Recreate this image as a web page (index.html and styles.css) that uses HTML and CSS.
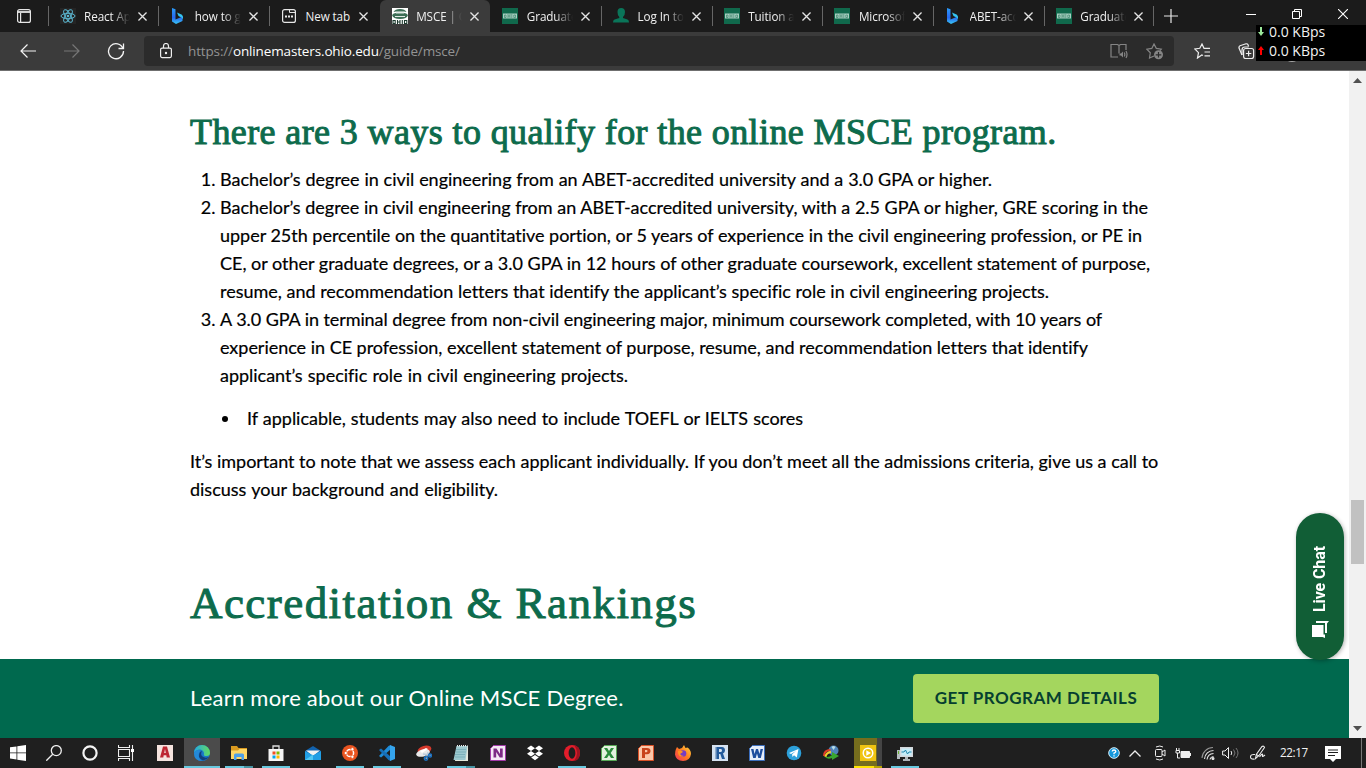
FILE: index.html
```html
<!DOCTYPE html>
<html lang="en">
<head>
<meta charset="utf-8">
<title>MSCE | Ohio University</title>
<link rel="stylesheet" href="styles.css">
</head>
<body>
<svg class="defs" aria-hidden="true">
  <defs>
    <linearGradient id="bingG" x1="0" y1="0" x2="0" y2="1"><stop offset="0" stop-color="#2a9cf8"/><stop offset=".6" stop-color="#2868f0"/><stop offset="1" stop-color="#38c8f4"/></linearGradient>
    <linearGradient id="edgeG" x1="0" y1="0" x2="1" y2="0"><stop offset="0" stop-color="#25a8e0"/><stop offset="1" stop-color="#62dc60"/></linearGradient>
    <linearGradient id="foxG" x1="0" y1="1" x2="1" y2="0"><stop offset="0" stop-color="#f0305c"/><stop offset=".5" stop-color="#ff7a20"/><stop offset="1" stop-color="#ffdc40"/></linearGradient>
    <symbol id="x" viewBox="0 0 8 8"><path d="M.4.4l7.2 7.2M7.6.4L.4 7.6" fill="none" stroke="#e4e4e4" stroke-width="1.200"/></symbol>
    <symbol id="ohio" viewBox="0 0 16 16"><path fill="#10694c" d="M0 0h16v16H0z"/><path fill="#a9cfc1" d="M1 5.500h14v5H1z"/><path d="M2.500 7h1.500v2.500h-1.500zM6 6v4M8 6v4M6 8h2M9.800 6v4M11.800 7h1.700v2.500h-1.700z" fill="none" stroke="#2b7a60" stroke-width=".6"/></symbol>
    <symbol id="bing" viewBox="0 0 16 16"><path fill="url(#bingG)" d="M2 0l3.500 1.300v10.200L12.500 8.500v4.500L6 16l-4-2.500z"/><path fill="#35c4f0" d="M7 4.500l5 2.300q1.500 1.500 1 4.700-.6-2-3-2.800L8.500 8z"/></symbol>
  </defs>
</svg>

<header class="tabs">
  <div class="tabmenu"><svg width="14" height="14" viewBox="0 0 14 14" fill="none" stroke="#e6e6e6" stroke-width="1.200"><rect x=".6" y=".6" width="12.800" height="12.800" rx="2"/><path d="M.6 3h12.800" stroke-width="1.800"/><path d="M3.600 4v9.400"/></svg></div>
  <div class="tab"><svg class="fav" viewBox="0 0 16 16"><path fill="#242424" d="M0 0h16v16H0z"/><g fill="none" stroke="#5bb6cf" stroke-width="1"><ellipse cx="8" cy="8" rx="7" ry="2.700"/><ellipse cx="8" cy="8" rx="7" ry="2.700" transform="rotate(60 8 8)"/><ellipse cx="8" cy="8" rx="7" ry="2.700" transform="rotate(120 8 8)"/></g><circle cx="8" cy="8" r="1.300" fill="#5bb6cf"/></svg><span class="tt">React App</span><svg class="cl"><use href="#x"/></svg></div>
  <div class="tab"><svg class="fav"><use href="#bing"/></svg><span class="tt">how to get</span><svg class="cl"><use href="#x"/></svg></div>
  <div class="tab"><svg class="fav" viewBox="0 0 16 16"><rect x="1.600" y="1.600" width="12.800" height="12.800" rx="2" fill="none" stroke="#e6e6e6" stroke-width="1.200"/><path d="M8.500 2v2.500h5.500" fill="none" stroke="#e6e6e6"/><path d="M4 7.500h2v2H4zM7 7.500h2v2H7zM10 7.500h2v2h-2z" fill="#e6e6e6"/></svg><span class="tt full">New tab</span><svg class="cl"><use href="#x"/></svg></div>
  <div class="tab on"><svg class="fav" viewBox="0 0 16 16"><path fill="#fff" d="M0 0h16v16H0z"/><path fill="#3b6e55" d="M1.500 4Q3 1 8 1t6.500 3L12 3.500H4zM0 7q1.500-2 4-2h8q2.500 0 4 2-1 4-8 4T0 7z"/><path fill="#dfe9e4" d="M4 4h8v1.500H4zM3 8h10v1H3z"/><path d="M1 12.500h2.200v3H1zM5.500 12v4M8 12v4M5.500 14H8M10.300 12v4M12.500 12.500h2.300v3h-2.300z" fill="none" stroke="#1c3a2e" stroke-width="1.100"/></svg><span class="tt">MSCE | Ohio</span><svg class="cl"><use href="#x"/></svg></div>
  <div class="tab nosep"><svg class="fav"><use href="#ohio"/></svg><span class="tt">Graduate</span><svg class="cl"><use href="#x"/></svg></div>
  <div class="tab"><svg class="fav" viewBox="0 0 16 16"><path fill="#0a7559" d="M4.500 4q0-4 3.700-4T12 4q0 3.500-2 5v1l4.500 1.500q1.500.5 1.500 3H0q0-2.500 1.500-3L6.300 10V9Q4.500 7.500 4.500 4z"/></svg><span class="tt">Log In to</span><svg class="cl"><use href="#x"/></svg></div>
  <div class="tab"><svg class="fav"><use href="#ohio"/></svg><span class="tt">Tuition and</span><svg class="cl"><use href="#x"/></svg></div>
  <div class="tab"><svg class="fav"><use href="#ohio"/></svg><span class="tt">Microsoft</span><svg class="cl"><use href="#x"/></svg></div>
  <div class="tab"><svg class="fav"><use href="#bing"/></svg><span class="tt">ABET-accr</span><svg class="cl"><use href="#x"/></svg></div>
  <div class="tab"><svg class="fav"><use href="#ohio"/></svg><span class="tt">Graduate</span><svg class="cl"><use href="#x"/></svg></div>
  <div class="newtab"><svg width="14" height="14" viewBox="0 0 14 14"><path d="M7 0v14M0 7h14" stroke="#e8e8e8" stroke-width="1.200"/></svg></div>
  <div class="wins">
    <svg width="10" height="10"><path d="M0 5.500h10" stroke="#fff"/></svg>
    <svg width="10" height="10" fill="none" stroke="#fff"><path d="M.5 2.500h7v7h-7zM2.500 2.500v-2h7v7h-2"/></svg>
    <svg width="10" height="10"><path d="M0 0l10 10M10 0L0 10" stroke="#fff" stroke-width="1.100"/></svg>
  </div>
</header>

<nav class="bar">
  <svg class="nb" viewBox="0 0 18 18"><path d="M17 9H2M8.500 2.500L2 9l6.500 6.500" fill="none" stroke="#f4f4f4" stroke-width="1.200"/></svg>
  <svg class="nb" viewBox="0 0 18 18"><path d="M1 9h15M9.500 2.500L16 9l-6.500 6.500" fill="none" stroke="#777" stroke-width="1.200"/></svg>
  <svg class="nb" viewBox="0 0 18 18"><path d="M16 6.500A7.500 7.500 0 1 0 16.500 9M16.500 1.500v5h-5" fill="none" stroke="#f4f4f4" stroke-width="1.300"/></svg>
  <div class="addr">
    <svg width="14" height="16" viewBox="0 0 14 16" fill="none" stroke="#eee" stroke-width="1.200"><rect x="1.600" y="5.100" width="10.800" height="9.500" rx="1.500"/><path d="M4.500 5.100V3a2.500 2.500 0 0 1 5 0v2.100"/><circle cx="7" cy="10" r=".6" fill="#eee"/></svg>
    <span class="url">https://<b>onlinemasters.ohio.edu</b>/guide/msce/</span>
    <svg class="rd" width="18" height="16" viewBox="0 0 18 16" fill="none" stroke="#858585" stroke-width="1.200"><path d="M8 14H1V1.500h6.500L9 2.500l1.500-1H16V7M9 2.500v8"/><path d="M9.500 10.500h1.500l2-2v6l-2-2H9.500z" fill="#858585" stroke="none"/><path d="M14.300 9.500q1 2 0 4M16 8q2 3.500 0 7"/></svg>
    <svg width="18" height="17" viewBox="0 0 18 17" fill="none" stroke="#858585" stroke-width="1.200"><path d="M8 13l-4.500 2 .8-5.200L.8 6.200l5-.8L8 1l2.300 4.400 5 .8L14 7.700"/><circle cx="12.500" cy="11.800" r="4.500" fill="#858585" stroke="none"/><path d="M12.500 9v5.600M9.700 11.800h5.600" stroke="#2b2b2b"/></svg>
  </div>
  <svg class="favs" width="17" height="16" viewBox="0 0 17 16" fill="none" stroke="#eee" stroke-width="1.200"><path d="M9 12.600l-1.200-.7L3.500 15l1-5.300L.8 6l5-.7L8 1l2 4.300h6M10.500 9H16M10.500 12.800H16"/></svg>
  <svg class="coll" width="17" height="16" viewBox="0 0 17 16" fill="none" stroke="#eee" stroke-width="1.200"><path d="M4 12L1 5Q.7 3.300 2 2.700L8 .8q1.500-.3 2 1l.6 1.700"/><path d="M4 12V7q0-3 3-3h3.600"/><rect x="5.600" y="5.500" width="10" height="10" rx="2"/><path d="M10.600 7.800v5.400M7.900 10.500h5.400"/></svg>
  <i class="avatar"></i>
</nav>
<aside class="net"><div><svg width="6" height="9" viewBox="0 0 6 9"><path d="M2 0h2v5h2L3 9 0 5h2z" fill="#9be89b"/></svg>0.0 KBps</div><div><svg width="6" height="9" viewBox="0 0 6 9"><path d="M2 9h2V4h2L3 0 0 4h2z" fill="#f00"/></svg>0.0 KBps</div></aside>

<div class="view">
  <main class="page">
    <article>
      <h3>There are 3 ways to qualify for the online MSCE program.</h3>
      <ol>
        <li><span class="ln w772">Bachelor’s degree in civil engineering from an ABET-accredited university and a 3.0 GPA or higher.</span></li>
        <li><span class="ln w928">Bachelor’s degree in civil engineering from an ABET-accredited university, with a 2.5 GPA or higher, GRE scoring in the</span>
          <span class="ln w922">upper 25th percentile on the quantitative portion, or 5 years of experience in the civil engineering profession, or PE in</span>
          <span class="ln w930">CE, or other graduate degrees, or a 3.0 GPA in 12 hours of other graduate coursework, excellent statement of purpose,</span>
          <span class="ln w829">resume, and recommendation letters that identify the applicant’s specific role in civil engineering projects.</span></li>
        <li><span class="ln w882">A 3.0 GPA in terminal degree from non-civil engineering major, minimum coursework completed, with 10 years of</span>
          <span class="ln w868">experience in CE profession, excellent statement of purpose, resume, and recommendation letters that identify</span>
          <span class="ln w408">applicant’s specific role in civil engineering projects.</span></li>
      </ol>
      <ul><li><span class="ln w556">If applicable, students may also need to include TOEFL or IELTS scores</span></li></ul>
      <p><span class="ln w968">It’s important to note that we assess each applicant individually. If you don’t meet all the admissions criteria, give us a call to</span>
        <span class="ln w308">discuss your background and eligibility.</span></p>
      <h2>Accreditation &amp; Rankings</h2>
    </article>
    <section class="cta"><span class="learn">Learn more about our Online MSCE Degree.</span><a class="btn"><span>GET PROGRAM DETAILS</span></a></section>
  </main>
  <div class="scroll"><svg width="9" height="5"><path d="M0 5L4.500 0 9 5z" fill="#505050"/></svg><i class="thumb"></i><svg width="9" height="5"><path d="M0 0l4.500 5L9 0z" fill="#505050"/></svg></div>
  <div class="chat"><span>Live Chat</span><svg width="17" height="17" viewBox="0 0 17 17"><path fill="#fff" d="M4 0h13l-2 2.500V12h-2V2H4z"/><path fill="#fff" d="M0 4h11.500v9.500H13V17l-2.500-1H0z"/></svg></div>
</div>

<footer class="task">
  <div class="c s"><svg viewBox="0 0 16 16" fill="#fff"><path d="M0 2.300l6.500-.9v6.100H0zM7.300 1.300L16 0v7.500H7.300zM0 8.300h6.500v6.200L0 13.600zM7.300 8.300H16V16l-8.700-1.300z"/></svg></div>
  <div class="c s"><svg viewBox="0 0 16 16" fill="none" stroke="#eee" stroke-width="1.300"><circle cx="10.300" cy="5.600" r="5"/><path d="M6.700 9.200L.3 15.700"/></svg></div>
  <div class="c s"><svg viewBox="0 0 16 16"><circle cx="8" cy="8" r="6.600" fill="none" stroke="#f4f4f4" stroke-width="2.200"/></svg></div>
  <div class="c s"><svg viewBox="0 0 16 16" fill="none" stroke="#eee" stroke-width="1.100"><path d="M.5 0v2.500h11V0M.5 16v-2.500h11V16M.5 4.500h11v7H.5zM14.500 0v16"/><path d="M13 4h3v3h-3z" fill="#fff" stroke="none"/></svg></div>
  <div class="c acad"><svg viewBox="0 0 16 16"><path fill="#f5e4df" d="M0 0h16v16H0z"/><path fill="#bd2632" fill-rule="evenodd" d="M6 1.500h4L13 12.500H9.700l-.4-2.200H6.700l-.4 2.200H3zM8 4L7.200 8h1.600z"/></svg></div>
  <div class="c act"><svg viewBox="0 0 16 16"><circle cx="8" cy="8" r="8" fill="#1878c8"/><path fill="url(#edgeG)" d="M0 8a8 8 0 0 1 16 0q0 3-3.500 3T10 9Q10 5 6 4.500 2 4.500 0 8z"/><path fill="#123f7c" d="M6 7q-3 5 2 8 4 1 7-3-4 1.500-6.500-.5T8 6z"/><path fill="#2489d8" d="M0 8q2-4 6.500-2.500Q3 9 6 14.500q1 1 2 1.500Q0 16 0 8z"/></svg></div>
  <div class="c run more"><svg viewBox="0 0 16 16"><path fill="#d99a20" d="M0 1h6l1.500 2H16v11H0z"/><path fill="#ffd767" d="M0 5.500h7L8.500 4H16v10H0z"/><path fill="#4da0e8" d="M3 15V10q0-1.500 1.500-1.500h7Q13 8.500 13 10v5h-2.500v-3h-5v3z"/></svg></div>
  <div class="c run"><svg viewBox="0 0 16 16"><path d="M5 4V1h6v3" fill="none" stroke="#ddd" stroke-width="1.300"/><path fill="#f5f5f5" d="M.5 4h15v12H.5z"/><path fill="#f25022" d="M4.500 6.500h3v3h-3z"/><path fill="#7fba00" d="M8.500 6.500h3v3h-3z"/><path fill="#00a4ef" d="M4.500 10.500h3v3h-3z"/><path fill="#ffb900" d="M8.500 10.500h3v3h-3z"/></svg></div>
  <div class="c"><svg viewBox="0 0 16 16"><path fill="#1262ad" d="M0 6l8-5 8 5-2 4H2z"/><path fill="#f3f3f3" d="M1 5.500h14L8 11z"/><path fill="#219ee4" d="M0 6l8 4.500L16 6v9H0z"/><path fill="#50c6f2" d="M0 15l8-5.500V15z"/></svg></div>
  <div class="c run"><svg viewBox="0 0 16 16"><circle cx="8" cy="8" r="8" fill="#e95420"/><circle cx="8" cy="8" r="3.600" fill="none" stroke="#fff" stroke-width="1.500"/><g fill="#fff" stroke="#e95420" stroke-width=".7"><circle cx="3.800" cy="8" r="1.600"/><circle cx="10.400" cy="4.200" r="1.600"/><circle cx="10.400" cy="11.800" r="1.600"/></g></svg></div>
  <div class="c run"><svg viewBox="0 0 16 16"><path fill="#1f8cd8" d="M11.500 0v4.500L2 12.500 0 11l9.500-10z"/><path fill="#166fb8" d="M11.500 16v-4.500L2 3.500 0 5l9.500 10z"/><path fill="#35a5ee" d="M11 0l5 2v12l-5 2z"/></svg></div>
  <div class="c"><svg viewBox="0 0 16 16"><ellipse cx="8.500" cy="5" rx="7" ry="4" transform="rotate(-15 8 5)" fill="#d6392c"/><ellipse cx="7" cy="8" rx="7" ry="3.500" transform="rotate(-15 7 8)" fill="#e9e9e9"/><path d="M4 6l6-3 2 1-6 4z" fill="#fff"/><path d="M7 9l8 1M12 7l-2 7" stroke="#bcd" stroke-width="1.300"/><circle cx="10" cy="13.500" r="1.700" fill="none" stroke="#1a72c4" stroke-width="1.500"/><circle cx="14" cy="10.500" r="1.500" fill="none" stroke="#1a72c4" stroke-width="1.500"/></svg></div>
  <div class="c run more"><svg viewBox="0 0 16 16"><path fill="#e4e8dc" d="M4 1h11v15H2z"/><path fill="#9cc8ce" d="M3.500 1h11L12.500 15H.5z"/><path d="M3 4.500h10M3 7h10M2 9.500h10M2 12h10" stroke="#6fa6b0" stroke-width=".7"/><path d="M4 .8h10.500" stroke="#eee" stroke-width="1.600" stroke-dasharray="1 1"/></svg></div>
  <div class="c"><svg viewBox="0 0 16 16"><path fill="#f6e8f6" stroke="#a239a8" d="M.5 3.500l3-3h12v15H.5z"/><path fill="#7d2b85" d="M3.500 3.500h3L10 9V3.500h2.700v9h-3L6.200 7v5.500H3.500z"/></svg></div>
  <div class="c"><svg viewBox="0 0 16 16" fill="#fff"><path d="M4 .5l4 2.700L4 6 0 3.200zM12 .5l4 2.700L12 6 8 3.200zM4 6l4 2.700-4 2.700-4-2.700zM12 6l4 2.700-4 2.700-4-2.700zM8 10l3.800 2.600L8 15.200l-3.800-2.600z"/></svg></div>
  <div class="c run"><svg viewBox="0 0 16 16"><circle cx="8" cy="8" r="8" fill="#e31d2b"/><path fill="#9e1320" d="M10 0q6 1 6 8t-6 8q3-4 3-8t-3-8z"/><ellipse cx="8" cy="8" rx="3.400" ry="5.800" fill="#1f1f1f"/></svg></div>
  <div class="c"><svg viewBox="0 0 16 16"><path fill="#e3f2df" stroke="#58a856" d="M.5 3.500l3-3h12v15H.5z"/><path fill="#2b8b3c" d="M3 3h3.200L8 6l2-3h3L9.700 8l3.500 5H10L8 10l-2 3H3l3.500-5z"/></svg></div>
  <div class="c"><svg viewBox="0 0 16 16"><path fill="#fbc7a9" stroke="#d95127" d="M.5 3.500l3-3h12v15H.5z"/><path fill="#c8441c" fill-rule="evenodd" d="M4 3h5q3.500 0 3.500 3T9 9.200H7V13H4zM7 5v2.200h1.500q1 0 1-1.100T8.500 5z"/></svg></div>
  <div class="c"><svg viewBox="0 0 16 16"><path fill="url(#foxG)" d="M1 4l1-2 2 2 3-1 2-3 1.500 3 2-.5Q16 5 16 9q-1 7-8 7T0 9.500Q0 6 1 4z"/><circle cx="8" cy="8.500" r="3.300" fill="#753cc4"/><path fill="#ff9320" d="M3 6q2-1 4 0l1 1-3 2q1 2 4 2-5 2-6-3z"/></svg></div>
  <div class="c"><svg viewBox="0 0 16 16"><path fill="#d6e3f2" d="M0 0h16v16H0z"/><path fill="#91afd0" d="M3 2h3v12H3z"/><path fill="#245b9b" fill-rule="evenodd" d="M4.500 2H10q3 0 3 3.500 0 2-2 3L13 14h-3L8.300 9H7v5H4.500zM7 4v3h2q1-.2 1-1.500T9 4z"/></svg></div>
  <div class="c"><svg viewBox="0 0 16 16"><path fill="#e6eef9" stroke="#3c6ebc" d="M.5 3.500l3-3h12v15H.5z"/><path fill="#1d4e9e" d="M2 4h2.500l1 5L7 4h2l1.500 5 1-5H14l-2.200 9H9.300L8 8.500 6.700 13H4.200z"/></svg></div>
  <div class="c"><svg viewBox="0 0 16 16"><circle cx="8" cy="8" r="7.300" fill="#2ca0da"/><path fill="#fff" d="M3 8l9.500-4-1.700 8.500L8 10.300 6.500 12l-.4-2.800L10 6 5 9z"/></svg></div>
  <div class="c"><svg viewBox="0 0 16 16"><circle cx="10.500" cy="5.500" r="5" fill="#4e83b8"/><path fill="#b8dce8" d="M8.500 2q2-2 4 0l-2 3z"/><path d="M1 11Q1 5 7.500 5" fill="none" stroke="#e43d27" stroke-width="2"/><path d="M2.500 12Q3 7.500 8 7" fill="none" stroke="#f4ce2e" stroke-width="2"/><path fill="#39a72e" d="M1 11q4 2.500 8-1V7l7 4-7 4v-2q-5 2-8-2z"/></svg></div>
  <div class="c yel"><svg viewBox="0 0 16 16"><path fill="#f0c412" d="M0 0h16v16H0z"/><circle cx="8" cy="8" r="5.500" fill="#fff"/><circle cx="8" cy="8" r="4" fill="#f0c412"/><path fill="#fff" d="M6.300 5.300L11 8l-4.700 2.700z"/></svg></div>
  <div class="c run"><svg viewBox="0 0 16 16"><path fill="#b6bcc0" d="M0 5h3v9H0z"/><path fill="#d3d8dc" d="M3 2h13v10H3z"/><path fill="#c6edf8" d="M4.500 3.500h10v7h-10z"/><path fill="#aeb5b9" d="M8 12h3v2h2v2H6v-2h2z"/><path d="M4.500 7H7l1.500-2 2 4L12 7h2.500" fill="none" stroke="#2085ac"/><path fill="#65b32e" d="M1 6h1v3H1z"/></svg></div>
  <div class="tray">
    <svg width="12" height="12" viewBox="0 0 12 12"><circle cx="6" cy="6" r="5.300" fill="#1497db" stroke="#d9eff8"/><path d="M4.200 4.500Q4.300 3 6 3t1.800 1.400Q7.800 5.400 6 6.200V7.300M6 8.200v1.300" fill="none" stroke="#fff" stroke-width="1.300"/></svg>
    <svg class="t2" width="12" height="7"><path d="M.5 6.500L6 1l5.500 5.500" fill="none" stroke="#eee" stroke-width="1.300"/></svg>
    <svg class="t3" width="12" height="16" viewBox="0 0 12 16" fill="none" stroke="#eee"><rect x="1.500" y="4.500" width="6.500" height="7" rx="1"/><path d="M8 7l3-2v6L8 9M2 2q4-2 7 0M2 14q4 2 7 0"/></svg>
    <svg class="t4" width="16" height="13" viewBox="0 0 16 13"><path d="M6 4.500h8.500v6H6z" fill="#eee" stroke="#eee"/><path d="M5 11H2.500V6M1 3.500h3.500V6H1zM1.500 3V1M4 3V1M15.500 6v3" fill="none" stroke="#eee"/></svg>
    <svg class="t5" width="14" height="14" viewBox="0 0 14 14" fill="none" stroke="#e4e4e4" stroke-width="1.100"><path d="M1 12A11 11 0 0 1 12 1.500" opacity=".6"/><path d="M3.500 13A9 9 0 0 1 12.500 4.500M6 13.500A7 7 0 0 1 12.500 7.500M9 13.500Q9.500 11 12.500 10.500"/><circle cx="12" cy="12.500" r="1" fill="#eee"/></svg>
    <svg class="t6" width="17" height="14" viewBox="0 0 17 14" fill="none" stroke="#eee"><path d="M.6 5H3l3.500-3.500v11L3 9H.6z"/><path d="M9 5q1.500 2 0 4"/><path d="M11.500 3.500q3 3.500 0 7M14 2q4 5 0 10" stroke="#777"/></svg>
    <svg class="t7" width="16" height="16" viewBox="0 0 16 16" fill="none" stroke="#eee" stroke-width="1.100"><path d="M5.500 13.500l.8-4L12 1.500q1.700-1 2.500 1l-5.700 8.200zM6 9.500l2.700 1.200M5 9.500q-4.500-.5-4.500 2.500 0 2.500 4 2M9.500 12l2-2.500q1.500-1 1 1-.5 2 2.500-.5"/></svg>
    <span class="time">22:17</span>
    <svg class="t8" width="16" height="16" viewBox="0 0 16 16"><path fill="#fff" d="M0 0h16v13h-5l-3 3-3-3H0z"/><path d="M3 4h10M3 6.500h10M3 9.500h7" stroke="#1f1f1f"/></svg>
    <i class="edge"></i>
  </div>
</footer>
</body>
</html>
```
FILE: styles.css
```css
* { box-sizing: border-box; }
body { margin: 0; width: 1366px; height: 768px; overflow: hidden; display: flex; flex-direction: column; background: #fff; font-family: "Open Sans", "Noto Sans", sans-serif; position: relative; }
svg { display: block; flex: none; }
.defs { position: absolute; width: 0; height: 0; }

.tabs { height: 32px; flex: none; background: #1b1b1b; display: flex; color: #f0f0f0; }
.tabmenu { width: 47.6px; flex: none; padding: 9px 0 0 17px; }
.tab { width: 110.7px; flex: none; display: flex; align-items: center; padding-left: 12px; position: relative; }
.tab::before { content: ""; position: absolute; left: 0; top: 6px; width: 1px; height: 20px; background: #666; }
.tab.on { background: #3b3b3b; border-radius: 6px 6px 0 0; }
.tab.on::before, .tab.nosep::before { display: none; }
.fav { width: 16px; height: 16px; }
.tt { font-size: 11.7px; line-height: 16px; width: 46px; margin-left: 8.5px; white-space: nowrap; overflow: hidden; letter-spacing: -.1px; -webkit-mask-image: linear-gradient(90deg, #000 28px, transparent 46px); }
.tt.full { -webkit-mask-image: none; }
.cl { width: 9px; height: 9px; margin-left: 8px; }
.newtab { padding: 3px 0 0 10px; border-left: 1px solid #666; height: 20px; margin-top: 6px; margin-left: -1px; }
.wins { margin-left: auto; display: flex; gap: 36px; padding: 9px 18px 0 0; }

.bar { height: 39px; flex: none; background: #3b3b3b; border-bottom: 1px solid #6f6f6f; display: flex; align-items: center; padding-left: 19px; }
.nb { width: 18px; height: 18px; margin-right: 26px; }
.addr { width: 1030px; height: 30px; background: #2b2b2b; border-radius: 4px; display: flex; align-items: center; padding: 0 10px 0 15px; margin-left: -7px; }
.url { margin-left: 15px; color: #939393; font-size: 13.5px; letter-spacing: -.14px; white-space: nowrap; }
.url b { color: #fff; font-weight: 400; }
.rd { margin-left: auto; margin-right: 18px; }
.favs { margin-left: 20px; }
.coll { margin-left: 27px; }
.avatar { width: 16px; height: 16px; border-radius: 50%; background: #aaa; margin-left: 29px; margin-top: 5px; }
.net { position: absolute; left: 1256px; top: 25px; width: 110px; height: 36px; background: #000; color: #f2f2f2; font-size: 14px; line-height: 19px; }
.net div { display: flex; align-items: center; gap: 5px; padding-left: 2px; height: 19px; margin-top: -3px; }
.net div + div { margin-top: 0; }

.view { height: 667px; flex: none; display: flex; position: relative; }
.page { width: 1349px; display: flex; flex-direction: column; background: #fff; }
article { height: 588px; padding-left: 190px; overflow: hidden; }
h2, h3 { margin: 0; color: #0d6b4c; font-family: "Liberation Serif", serif; font-weight: 400; white-space: nowrap; -webkit-text-stroke: 1px #0d6b4c; }
h3 { font-size: 36px; line-height: 40px; margin-top: 41px; letter-spacing: .39px; }
h2 { font-size: 45px; line-height: 50px; margin-top: 75px; letter-spacing: 1.45px; }
ol, ul, p { margin: 0; color: #000; font-family: Lato, sans-serif; font-size: 18px; line-height: 28px; letter-spacing: -.02px; -webkit-text-stroke: .2px #000; }
ol { padding-left: 30px; margin-top: 13px; }
ul { padding-left: 57px; margin: 15px 0; list-style: none; }
ul li { position: relative; }
ul li::before { content: ""; position: absolute; left: -25px; top: 12px; width: 6px; height: 6px; border-radius: 50%; background: #000; }
.ln { display: block; text-align: justify; text-align-last: justify; white-space: nowrap; }
.w772 { width: 772px; } .w928 { width: 928px; } .w922 { width: 922px; } .w930 { width: 930px; }
.w829 { width: 829px; } .w882 { width: 882px; letter-spacing: -.1px; } .w868 { width: 868px; } .w408 { width: 408px; }
.w556 { width: 556px; } .w968 { width: 968px; } .w308 { width: 308px; }

.cta { height: 79px; background: #00694e; display: flex; align-items: center; justify-content: space-between; padding: 0 190px; font-family: Lato, sans-serif; }
.learn { color: #fff; font-size: 22px; white-space: nowrap; letter-spacing: .23px; margin-top: -2px; }
.btn { width: 246px; height: 49px; border-radius: 4px; background: #a4d65e; color: #063f30; font-size: 17px; font-weight: 700; display: flex; align-items: center; justify-content: center; padding-bottom: 2px; white-space: nowrap; letter-spacing: .5px; }
.scroll { width: 17px; background: #f1f1f1; display: flex; flex-direction: column; align-items: center; padding: 7px 0; }
.thumb { width: 13px; height: 64px; background: #c1c1c1; margin: 417px 0 auto; }
.chat { position: absolute; left: 1296px; top: 442px; width: 48px; height: 147px; border-radius: 24px; background: #115e36; box-shadow: 1px 1px 4px rgba(0,0,0,.3); display: flex; flex-direction: column; align-items: center; padding-top: 33px; gap: 9px; }
.chat span { writing-mode: vertical-rl; transform: rotate(180deg); color: #fff; font: 700 16px/20px Roboto, sans-serif; white-space: nowrap; letter-spacing: -.1px; }

.task { height: 30px; flex: none; background: #1f1f1f; display: flex; }
.c { width: 37px; flex: none; display: flex; padding: 7px 0 0 10px; position: relative; }
.c.s { width: 36px; }
.c.acad { margin-left: 3px; }
.c svg { width: 16px; height: 16px; }
.c.act { background: linear-gradient(#4b4b4b, #4b4b4b) 0 0 / 36px 100% no-repeat; }
.run::after, .act::after { content: ""; position: absolute; left: 4px; bottom: 0; width: 28px; height: 2px; background: #68c9df; }
.act::after { left: 0; width: 36px; }
.more::after { background: linear-gradient(90deg, #68c9df 19px, #4793a2 19px); }
.yel { background: linear-gradient(90deg, #756d1d 23px, #444 23px) 4px 0 / 28px 100% no-repeat; }
.yel::after { content: ""; position: absolute; left: 4px; bottom: 0; width: 28px; height: 2px; background: linear-gradient(90deg, #ffe500 20px, #b7a300 20px); }
.tray { margin-left: auto; display: flex; align-items: center; }
.t2 { margin-left: 9px; } .t3 { margin-left: 13px; } .t4 { margin-left: 9px; } .t5 { margin-left: 10px; }
.t6 { margin-left: 7px; } .t7 { margin-left: 11px; } .t8 { margin-left: 16px; margin-top: 1px; }
.time { color: #f2f2f2; font-size: 11.7px; margin-left: 14px; width: 29px; letter-spacing: -.4px; white-space: nowrap; margin-top: -2px; }
.edge { width: 1px; height: 30px; background: #777; margin-left: 20px; margin-right: 4px; }
```
